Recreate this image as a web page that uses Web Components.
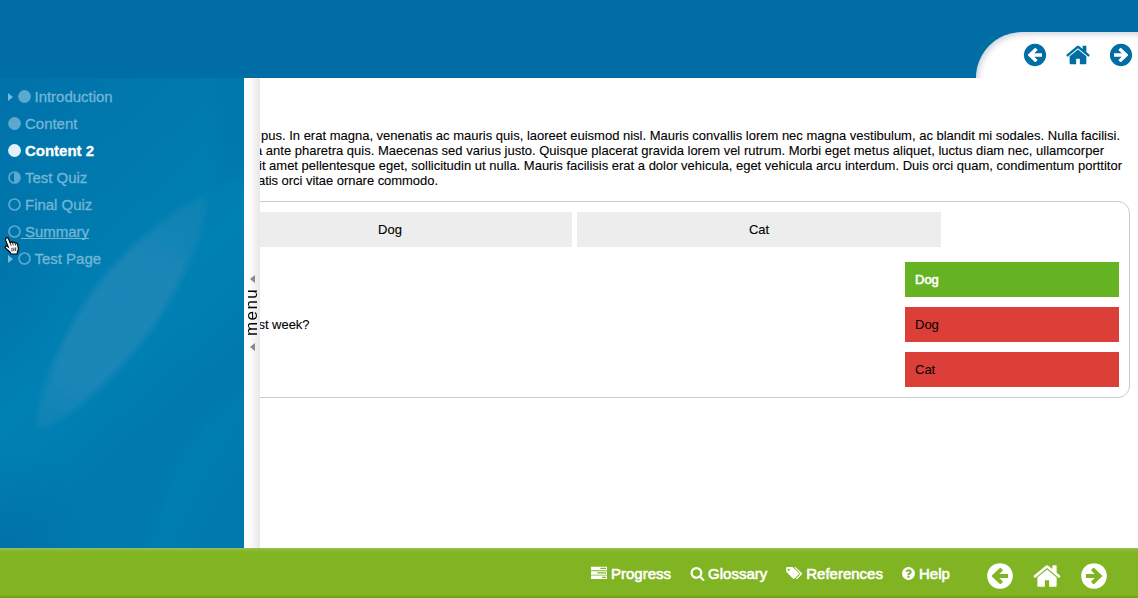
<!DOCTYPE html>
<html lang="en">
<head>
<meta charset="utf-8">
<title>Content 2</title>
<style>
html,body{margin:0;height:100%;overflow:hidden;background:#fff}
body{font-family:"Liberation Sans",Arial,sans-serif;font-size:13px;color:#000}
</style>
</head>
<body>
<course-app></course-app>
<script>
const define=(name,html,init)=>customElements.define(name,class extends HTMLElement{
  constructor(){super();this.attachShadow({mode:'open'})}
  connectedCallback(){this.shadowRoot.innerHTML=html;if(init)init(this,this.shadowRoot)}
});

const disc='q0 209-103 385.5t-279.5 279.5-385.5 103-385.5-103-279.5-279.5-103-385.5 103-385.5 279.5-279.5 385.5-103 385.5 103 279.5 279.5 103 385.5z';
const arrow='<path fill-rule="evenodd" d="M896 128a768 768 0 1 0 .1 0zM1380 780V1012H850L1040 1202Q1080 1245 1040 1285L960 1365Q915 1405 870 1365L430 940Q385 896 430 852L870 427Q915 387 960 427L1040 507Q1080 547 1040 590L850 780Z"/>';
const icons={
  prev:arrow,
  next:'<g transform="matrix(-1 0 0 1 1792 0)">'+arrow+'</g>',
  home:'<path d="M1472 992v480q0 26-19 45t-45 19h-384v-384h-256v384h-384q-26 0-45-19t-19-45v-480q0-1 .5-3t.5-3l575-474 575 474q1 2 1 6zm223-69l-62 74q-8 9-21 11h-3q-13 0-21-7l-692-577-692 577q-12 8-24 7-13-2-21-11l-62-74q-8-10-7-23.5t11-21.5l719-599q32-26 76-26t76 26l244 204v-195q0-14 9-23t23-9h192q14 0 23 9t9 23v408l219 182q10 8 11 21.5t-7 23.5z"/>',
  search:'<path d="M1216 832q0-185-131.5-316.5t-316.5-131.5-316.5 131.5-131.5 316.5 131.5 316.5 316.5 131.5 316.5-131.5 131.5-316.5zm512 832q0 52-38 90t-90 38q-54 0-90-38l-343-342q-179 124-399 124-143 0-273.5-55.5t-225-150-150-225-55.5-273.5 55.5-273.5 150-225 225-150 273.5-55.5 273.5 55.5 225 150 150 225 55.5 273.5q0 220-124 399l343 343q37 37 37 90z"/>',
  help:'<path d="M1024 1376v-192q0-14-9-23t-23-9h-192q-14 0-23 9t-9 23v192q0 14 9 23t23 9h192q14 0 23-9t9-23zm256-672q0-88-55.5-163t-138.5-116-170-41q-243 0-371 213-15 24 8 42l132 100q7 6 19 6 16 0 25-12 53-68 86-92 34-24 86-24 48 0 85.5 26t37.5 59q0 38-20 61t-68 45q-63 28-115.5 86.5t-52.5 125.5v36q0 14 9 23t23 9h192q14 0 23-9t9-23q0-19 21.5-49.5t54.5-49.5q32-18 49-28.5t46-35 44.5-48 28-60.5 12.5-81zm384 192'+disc+'"/>',
  tags:'<path fill-rule="evenodd" d="M10 330Q10 220 120 220H620Q710 220 780 290L1330 840Q1420 925 1330 1010L910 1430Q825 1515 740 1430L100 790Q10 700 10 610ZM290 390a105 105 0 1 0 .1 0zM850 220H930Q1010 220 1080 290L1660 840Q1750 925 1660 1010L1240 1430Q1130 1530 1040 1440L1400 1080Q1530 930 1400 790Z"/>',
  tasks:'<path fill-rule="evenodd" d="M0 200h1792v400H0zM1050 310v140h640V310zM0 690h1792v400H0zM700 800v140h990V800zM0 1180h1792v400H0zM1250 1310v140h440v-140z"/>'
};
define('x-icon',`<style>:host{display:block;flex:none}svg{display:block;width:100%;height:100%;fill:currentColor}</style><svg viewBox="0 0 1792 1792"></svg>`,
  (h,r)=>{r.querySelector('svg').innerHTML=icons[h.getAttribute('name')]});

define('page-nav',`<style>:host{display:flex;align-items:center}x-icon{width:var(--s);height:var(--s)}</style>
<x-icon name="prev"></x-icon><x-icon name="home"></x-icon><x-icon name="next"></x-icon>`);

define('top-bar',`<style>
:host{display:flex;justify-content:flex-end;align-items:flex-end;height:78px;background:#006ea5}
.tab{display:grid;width:162px;height:46px;border-top-left-radius:46px;overflow:hidden;background:#fff}
.shade,page-nav{grid-area:1/1}
.shade{height:60px;border-top-left-radius:46px;box-shadow:inset 2px 2px 6px rgba(0,40,80,.22);margin-right:-10px}
page-nav{--s:26px;gap:17px;color:#006ea5;width:112px;height:26px;margin:9.5px 0 0 46px}
</style><div class="tab"><div class="shade"></div><page-nav></page-nav></div>`);

define('menu-item',`<style>
:host{display:flex;align-items:center;height:27px;font-size:15px;color:#74b6d6;letter-spacing:-.02px;-webkit-text-stroke:.3px currentColor}
.t{display:none;border-left:5px solid #78bad9;border-top:4.5px solid transparent;border-bottom:4.5px solid transparent;margin-right:4.5px}
:host([sub]) .t{display:block}
svg{width:13px;height:13px;flex:none;display:block}
:host([current]){color:#fff;font-weight:bold}
.l{white-space:pre;padding-left:4px}
:host([hover]) .l{background:linear-gradient(#74b6d6,#74b6d6) 0 15px/100% 1px no-repeat}
</style><i class="t"></i><svg viewBox="0 0 13 13"></svg><span class="l"><slot></slot></span>`,
(h,r)=>{const s=h.getAttribute('state'),c=h.hasAttribute('current')?'#e3f0f8':'#5ba9ce';
  r.querySelector('svg').innerHTML=s==='full'?`<circle cx="6.5" cy="6.5" r="6.4" fill="${c}"/>`:
  `<circle cx="6.5" cy="6.5" r="5.5" fill="none" stroke="${c}" stroke-width="1.7"/>`+(s==='half'?`<path d="M6 1a5.5 5.5 0 0 1 0 11z" fill="${c}"/>`:'')});

define('side-menu',`<style>
:host{display:grid;width:244px;height:470px;overflow:hidden;background:#007eb0}
.bg,nav{grid-area:1/1}
.bg{width:244px;height:470px;display:block}
nav{padding:5px 0 0 8px;z-index:1}
</style>
<svg class="bg" viewBox="0 0 244 470">
<defs>
<linearGradient id="a" gradientUnits="userSpaceOnUse" x1="0" y1="0" x2="343" y2="390"><stop offset="0" stop-color="#0072aa"/><stop offset=".33" stop-color="#007baf"/><stop offset=".5" stop-color="#0081b3"/><stop offset=".58" stop-color="#007fb2"/><stop offset=".7" stop-color="#0079ae"/><stop offset="1" stop-color="#0079ae"/></linearGradient>
<radialGradient id="d"><stop offset="0" stop-color="#006aa5" stop-opacity=".5"/><stop offset="1" stop-color="#006aa5" stop-opacity="0"/></radialGradient>
<linearGradient id="c" gradientUnits="userSpaceOnUse" x1="150" y1="360" x2="244" y2="410"><stop offset="0" stop-color="#0085b7" stop-opacity=".6"/><stop offset=".5" stop-color="#0084b6" stop-opacity=".5"/><stop offset="1" stop-color="#0078af" stop-opacity=".1"/></linearGradient>
<linearGradient id="e" gradientUnits="userSpaceOnUse" x1="45" y1="340" x2="200" y2="130"><stop offset="0" stop-color="#2088b8" stop-opacity=".5"/><stop offset=".25" stop-color="#2088b8" stop-opacity=".85"/><stop offset=".7" stop-color="#2088b8" stop-opacity=".8"/><stop offset="1" stop-color="#2088b8" stop-opacity=".4"/></linearGradient>
<filter id="s" x="-20%" y="-20%" width="140%" height="140%"><feGaussianBlur stdDeviation="3"/></filter>
<filter id="t" x="-20%" y="-20%" width="140%" height="140%"><feGaussianBlur stdDeviation="7"/></filter>
</defs>
<path fill="url(#a)" d="M0 0h244v470H0z"/>
<ellipse cx="0" cy="470" rx="90" ry="110" fill="url(#d)"/>
<ellipse cx="0" cy="190" rx="70" ry="120" fill="url(#d)" opacity=".6"/>
<path d="M217 0h37v95Q225 100 217 115z" fill="#0073ac" opacity=".4" filter="url(#s)"/>
<path d="M150 480Q170 350 260 305V480z" fill="url(#c)" filter="url(#t)"/>
<path d="M206 119C208 146 183 207 150 253C115 302 55 354 38 349C33 327 62 255 96 209C128 166 190 119 206 119z" fill="url(#e)" filter="url(#s)"/>
</svg>
<nav>
<menu-item sub state="full">Introduction</menu-item>
<menu-item state="full">Content</menu-item>
<menu-item state="full" current>Content 2</menu-item>
<menu-item state="half">Test Quiz</menu-item>
<menu-item state="none">Final Quiz</menu-item>
<menu-item state="none" hover>Summary</menu-item>
<menu-item sub state="none">Test Page</menu-item>
</nav>`);

define('menu-handle',`<style>
:host{display:flex;flex-direction:column;align-items:center;box-sizing:border-box;padding-top:197px;width:16px;height:470px;gap:4px;background:linear-gradient(90deg,#fff 0,#fafafa 45%,#e7e7e7 100%)}
i{border-right:5px solid #888;border-top:4px solid transparent;border-bottom:4px solid transparent}
span{writing-mode:vertical-rl;transform:rotate(180deg);font-size:17px;line-height:16px;letter-spacing:1.4px;height:49px;margin:0 0 3px 0}
</style><i></i><span>menu</span><i></i>`);

/* One line of running text, tracked to an exact measure. */
define('text-line',`<style>:host{display:block;height:15px;line-height:15px;white-space:nowrap;-webkit-text-stroke:.1px currentColor}span{display:inline-block}</style><span><slot></slot></span>`,
(h,r)=>{const s=r.querySelector('span'),w=+h.getAttribute('measure');
  h.style.marginLeft=h.getAttribute('indent')+'px';
  s.style.letterSpacing=(w-s.getBoundingClientRect().width)/h.textContent.length+'px'});

define('drag-label',`<style>:host{display:grid;place-items:center;height:35px;background:#ededed;-webkit-text-stroke:.1px currentColor}</style><slot></slot>`);
define('answer-row',`<style>
:host{display:flex;justify-content:space-between;align-items:center;height:35px}
.a{box-sizing:border-box;width:214px;height:35px;line-height:35px;padding-left:10px;background:#dc3f38}
:host([correct]) .a{background:#65b322;color:#fff;-webkit-text-stroke:.6px #fff}
</style><div><slot></slot></div><div class="a"><slot name="answer"></slot></div>`);

define('quiz-panel',`<style>
:host{display:block;box-sizing:border-box;height:197px;margin:13px 8px 0 -63px;padding:10px;border:1px solid #c9cccd;border-radius:12px}
.labels{display:flex;gap:5px;margin-bottom:15px}
.labels *{width:364px}
.rows{display:grid;gap:10px}
</style>
<div class="labels"><drag-label>Dog</drag-label><drag-label>Cat</drag-label></div>
<div class="rows">
<answer-row correct><span slot="answer">Dog</span></answer-row>
<answer-row><text-line indent="50.5" measure="51">st week?</text-line><span slot="answer">Dog</span></answer-row>
<answer-row><span slot="answer">Cat</span></answer-row>
</div>`);

define('page-content',`<style>:host{display:block;box-sizing:border-box;flex:1;min-width:0;height:470px;padding-top:50px;overflow:hidden;background:#fff}</style>
<text-line indent="1" measure="859">pus. In erat magna, venenatis ac mauris quis, laoreet euismod nisl. Mauris convallis lorem nec magna vestibulum, ac blandit mi sodales. Nulla facilisi.</text-line>
<text-line indent="-5" measure="849">a ante pharetra quis. Maecenas sed varius justo. Quisque placerat gravida lorem vel rutrum. Morbi eget metus aliquet, luctus diam nec, ullamcorper</text-line>
<text-line indent="-1" measure="863">it amet pellentesque eget, sollicitudin ut nulla. Mauris facilisis erat a dolor vehicula, eget vehicula arcu interdum. Duis orci quam, condimentum porttitor</text-line>
<text-line indent="-2" measure="180">atis orci vitae ornare commodo.</text-line>
<quiz-panel></quiz-panel>`);

define('tool-link',`<style>:host{display:flex;align-items:center;height:20px;color:#fff;font-size:15px;-webkit-text-stroke:.6px #fff}x-icon{width:var(--i,15px);height:var(--i,15px);margin-right:var(--g,4px);-webkit-text-stroke:0}</style><x-icon></x-icon><slot></slot>`,
(h,r)=>{const i=document.createElement('x-icon');i.setAttribute('name',h.getAttribute('icon'));r.querySelector('x-icon').replaceWith(i)});

define('bottom-bar',`<style>
:host{display:flex;justify-content:flex-end;align-items:flex-start;box-sizing:border-box;height:50px;padding:0 29px 0 0;background:linear-gradient(#98c054 0,#85b72a 3px,#81b422 5px,#81b422 47px,#6c9a1c 50px)}
.tools{display:flex;padding-top:15px;margin-right:35.2px;gap:18.5px}
page-nav{--s:30px;color:#fff;gap:17px;height:30px;margin-top:13px}
</style>
<div class="tools">
<tool-link icon="tasks" style="--i:16px">Progress</tool-link>
<tool-link icon="search" style="--i:15px;--g:3.5px">Glossary</tool-link>
<tool-link icon="tags" style="--i:17px;--g:3.5px">References</tool-link>
<tool-link icon="help" style="--i:15px;--g:2.5px">Help</tool-link>
</div><page-nav></page-nav>`);

define('hand-cursor',`<style>:host{position:absolute;left:4px;top:237px;width:16px;height:18px}svg{display:block}</style>
<svg width="16" height="18" viewBox="0 0 16 18"><path d="M2.2 1C3.4.3 4.3 1 4.7 2.2L6.1 5.6C7 4.6 8 4.8 8.5 5.6C9.5 4.8 10.6 5 11.1 6C12.7 5.5 13.6 6.6 13.8 8.3L14.4 11.6Q14.4 13.5 13.5 14.8L13.2 17H7L6 15.2L1.6 11.2C.4 9.7 1.6 8.4 3.2 9.3L4.2 10L1.6 3.2Q1.3 1.7 2.2 1Z" fill="#fff" stroke="#000" stroke-width="1.2"/><path d="M6.3 6l.9 2.6M8.7 6l.7 2.4M11.2 6.4l.5 2.2M8 10.8v3.6M9.9 10.6v3.6M11.7 10.4v3.6" fill="none" stroke="#000" stroke-width=".8"/></svg>`);

define('course-app',`<style>:host{display:flex;flex-direction:column;width:1138px;height:598px;position:relative;overflow:hidden}.mid{display:flex;height:470px}</style>
<top-bar></top-bar>
<div class="mid"><side-menu></side-menu><menu-handle></menu-handle><page-content></page-content></div>
<bottom-bar></bottom-bar>
<hand-cursor></hand-cursor>`);
</script>
</body>
</html>
